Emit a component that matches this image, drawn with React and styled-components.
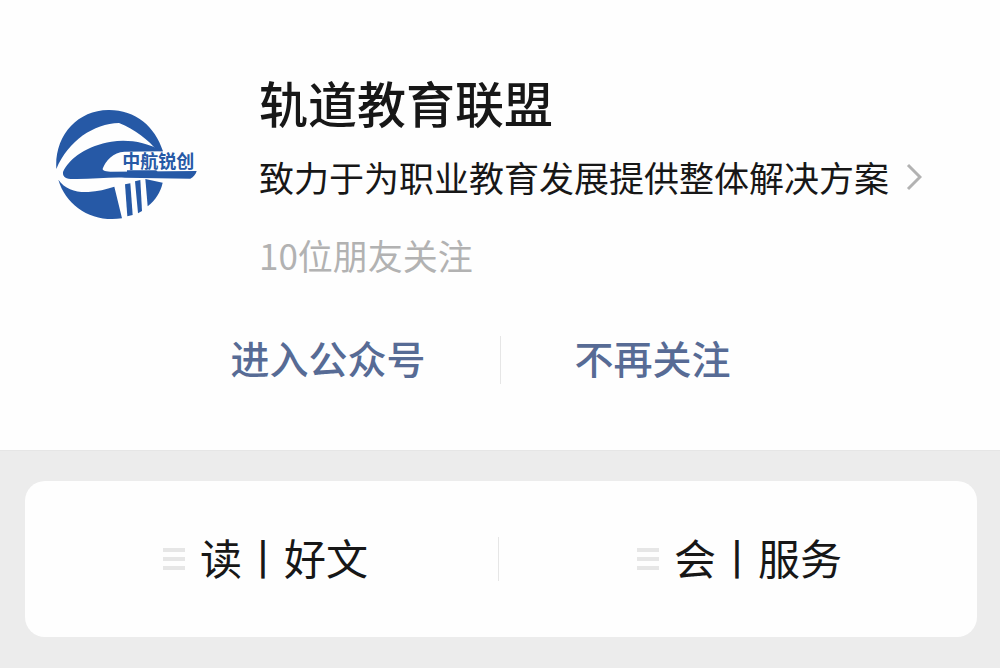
import React from 'react';
import styled, { createGlobalStyle } from 'styled-components';


const GlobalStyle = createGlobalStyle`
    * {
        box-sizing: border-box;
    }
    html, body, #root {
        min-height: 100%;
    }
    body {
        margin: 0;
        background: #ececec;
        color: #171717;
        font-family: "Noto Sans CJK SC", sans-serif;
    }
`
const Profile = styled.section`
    background: #fefefe;
    padding: 72px 24px 63px 55px;
    border-bottom: 1px solid #e6e6e6;
`
const Account = styled.div`
    display: flex;
    align-items: flex-start;
    gap: 60px;
`
const Logo = styled.svg`
    flex: none;
    width: 144px;
    height: 112px;
    margin-top: 36px;
`
const LogoText = styled.text`
    font-size: 54px;
    font-weight: 700;
`
const Info = styled.div`
    flex: 1;
    min-width: 0;
`
const Name = styled.h1`
    margin: 0 0 20px;
    font-size: 49px;
    line-height: 60px;
    font-weight: 500;
`
const Description = styled.a`
    display: flex;
    align-items: center;
    gap: 17px;
    color: inherit;
    font-size: 35px;
    line-height: 50px;
    text-decoration: none;
    white-space: nowrap;
`
const Chevron = styled.svg`
    flex: none;
    width: 16px;
    height: 28px;
`
const Friends = styled.p`
    margin: 28px 0 0;
    color: #b2b2b2;
    font-size: 35px;
    line-height: 50px;
`
const Actions = styled.div`
    display: flex;
    align-items: center;
    justify-content: center;
    gap: 74px;
    margin-top: 53px;
    padding-right: 70px;
`
const Divider = styled.span`
    width: 1px;
    height: ${({ $height }) => $height}px;
    background: #e6e6e6;
`
const Action = styled.button`
    border: 0;
    padding: 0 0 6px;
    background: none;
    color: #576b95;
    font-family: inherit;
    font-size: 39px;
    line-height: 48px;
    font-weight: 500;
    cursor: pointer;
`
const MenuBar = styled.nav`
    display: flex;
    align-items: center;
    margin: 30px 23px 31px 25px;
    padding: 46px 5px 46px 0;
    background: #fefefe;
    border-radius: 20px;
`
const MenuButton = styled.button`
    flex: 1;
    display: flex;
    align-items: center;
    justify-content: center;
    gap: 15px;
    border: 0;
    padding: 0 0 0 8px;
    background: none;
    color: inherit;
    font-family: inherit;
    font-size: 42px;
    line-height: 60px;
    cursor: pointer;
`
const MenuLabel = styled.span`
    padding-bottom: 4px;
`
const MenuIcon = styled.svg`
    width: 22px;
    height: 24px;
`

const AccountLogo = () => (
    <Logo viewBox="30 24 432 336" fill="#2659a6" role="img" aria-label="中航锐创">
        <path d="M34 207 C28 108 96 31 190 30 C270 29 330 78 354 154 L338 153 C310 120 270 88 222 69 C146 71 70 122 34 207Z" />
        <path d="M354 154 C300 124 246 118 199 125 C130 136 72 174 54 216 C52 232 64 237 84 237 C140 238 190 231 240 233 L436 236 C446 231 453 222 455 213 L196 215 C178 214 170 211 174 204 C181 184 205 156 238 155Z" />
        <path d="M40 239 C60 268 94 278 130 276 C158 274 184 268 208 260 L231 355 C142 369 63 318 40 239Z" />
        <path d="M240 253 L256 250 L263 345 L247 349Z" />
        <path d="M270 244 L286 240 L291 333 L279 340Z" />
        <path d="M301 237 L353 248 C347 276 331 301 308 319Z" />
        <path d="M246 211 L334 211 L338 216 L246 216Z" />
        <LogoText x="232" y="205">中航锐创</LogoText>
    </Logo>
)

const MenuItem = ({ label }) => (
    <MenuButton type="button">
        <MenuIcon viewBox="0 0 22 24" fill="#e6e6e6" aria-hidden="true">
            <rect y="1" width="22" height="4" />
            <rect y="10" width="22" height="4" />
            <rect y="19" width="22" height="4" />
        </MenuIcon>
        <MenuLabel>{label}</MenuLabel>
    </MenuButton>
)

const App = () => {
    return (
        <>
            <GlobalStyle />
            <Profile>
                <Account>
                    <AccountLogo />
                    <Info>
                        <Name>轨道教育联盟</Name>
                        <Description href="#">
                            致力于为职业教育发展提供整体解决方案
                            <Chevron viewBox="0 0 16 28" fill="none" stroke="#b2b2b2" strokeWidth="3" aria-hidden="true">
                                <path d="M2 2 L14 14 L2 26" />
                            </Chevron>
                        </Description>
                        <Friends>10位朋友关注</Friends>
                    </Info>
                </Account>
                <Actions>
                    <Action type="button">进入公众号</Action>
                    <Divider $height={48} />
                    <Action type="button">不再关注</Action>
                </Actions>
            </Profile>
            <MenuBar>
                <MenuItem label="读丨好文" />
                <Divider $height={44} />
                <MenuItem label="会丨服务" />
            </MenuBar>
        </>
    );
}


export default App;
